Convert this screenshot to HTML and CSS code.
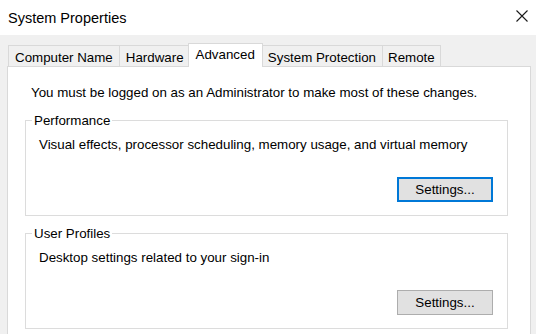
FILE: index.html
```html
<!DOCTYPE html>
<html lang="en">
<head>
<meta charset="utf-8">
<title>System Properties</title>
<link rel="stylesheet" href="styles.css">
</head>
<body>
<div class="window">
  <header class="titlebar">
    <span class="title">System Properties</span>
    <button class="close" aria-label="Close">
      <svg width="12" height="12" viewBox="0 0 12 12"><path d="M0.5 0.5 L11.5 11.5 M11.5 0.5 L0.5 11.5" stroke="#1a1a1a" stroke-width="1.1" fill="none"/></svg>
    </button>
  </header>
  <nav class="tabs">
    <div class="tab">Computer Name</div>
    <div class="tab">Hardware</div>
    <div class="tab active">Advanced</div>
    <div class="tab">System Protection</div>
    <div class="tab last">Remote</div>
  </nav>
  <main class="panel">
    <p class="notice">You must be logged on as an Administrator to make most of these changes.</p>
    <fieldset class="group first">
      <legend>Performance</legend>
      <p class="group-text">Visual effects, processor scheduling, memory usage, and virtual memory</p>
      <div class="actions"><button class="btn focused">Settings...</button></div>
    </fieldset>
    <fieldset class="group">
      <legend>User Profiles</legend>
      <p class="group-text">Desktop settings related to your sign-in</p>
      <div class="actions"><button class="btn">Settings...</button></div>
    </fieldset>
  </main>
</div>
</body>
</html>
```
FILE: styles.css
```css
html, body {
  margin: 0;
  padding: 0;
}
body {
  width: 536px;
  height: 334px;
  overflow: hidden;
  background: #f0f0f0;
  font-family: "Liberation Sans", Arial, sans-serif;
  font-size: 13.33px;
  line-height: 15px;
  color: #000;
}
.window {
  display: flex;
  flex-direction: column;
}
.titlebar {
  height: 35px;
  background: #ffffff;
  display: flex;
  align-items: center;
  justify-content: space-between;
  padding: 0 0 0 8px;
}
.title {
  font-size: 14.5px;
  line-height: normal;
  color: #000;
}
.close {
  border: 0;
  background: transparent;
  padding: 0;
  margin: 0 8px 0 0;
  width: 12px;
  height: 12px;
  display: flex;
  align-self: flex-start;
  margin-top: 10px;
}
.tabs {
  display: flex;
  align-items: flex-end;
  padding: 8px 0 0 8px;
}
.tab {
  height: 21px;
  box-sizing: border-box;
  padding: 4px 6px 0;
  border: 1px solid #d9d9d9;
  border-right: 0;
  border-bottom: 0;
  background: #f0f0f0;
  white-space: nowrap;
}
.tab.last {
  border-right: 1px solid #d9d9d9;
  padding: 4px 5px 0;
}
.tab.active {
  position: relative;
  z-index: 1;
  height: 24px;
  padding: 3px 7px 0;
  margin: 0 -2px -1px;
  border-right: 1px solid #d9d9d9;
  background: #ffffff;
}
.panel {
  margin: 0 5px 0 7px;
  background: #ffffff;
  border: 1px solid #d9d9d9;
  padding: 18px 22px 40px 17px;
}
.notice {
  margin: 0;
  padding-left: 6px;
}
.group {
  margin: 10px 0 0;
  padding: 9px 14px 13px 6px;
  border: 1px solid #dcdcdc;
  min-width: 0;
}
.group.first {
  margin-top: 13px;
}
.group legend {
  padding: 0 2px;
  line-height: 15px;
}
.group-text {
  margin: 0;
  padding-left: 7px;
}
.actions {
  display: flex;
  justify-content: flex-end;
  margin-top: 25px;
}
.btn {
  width: 96px;
  height: 25px;
  box-sizing: border-box;
  background: #e1e1e1;
  border: 1px solid #adadad;
  font-family: "Liberation Sans", Arial, sans-serif;
  font-size: 13.33px;
  color: #000;
  padding: 0;
  margin: 0;
}
.btn.focused {
  border: 2px solid #0078d7;
}
```
